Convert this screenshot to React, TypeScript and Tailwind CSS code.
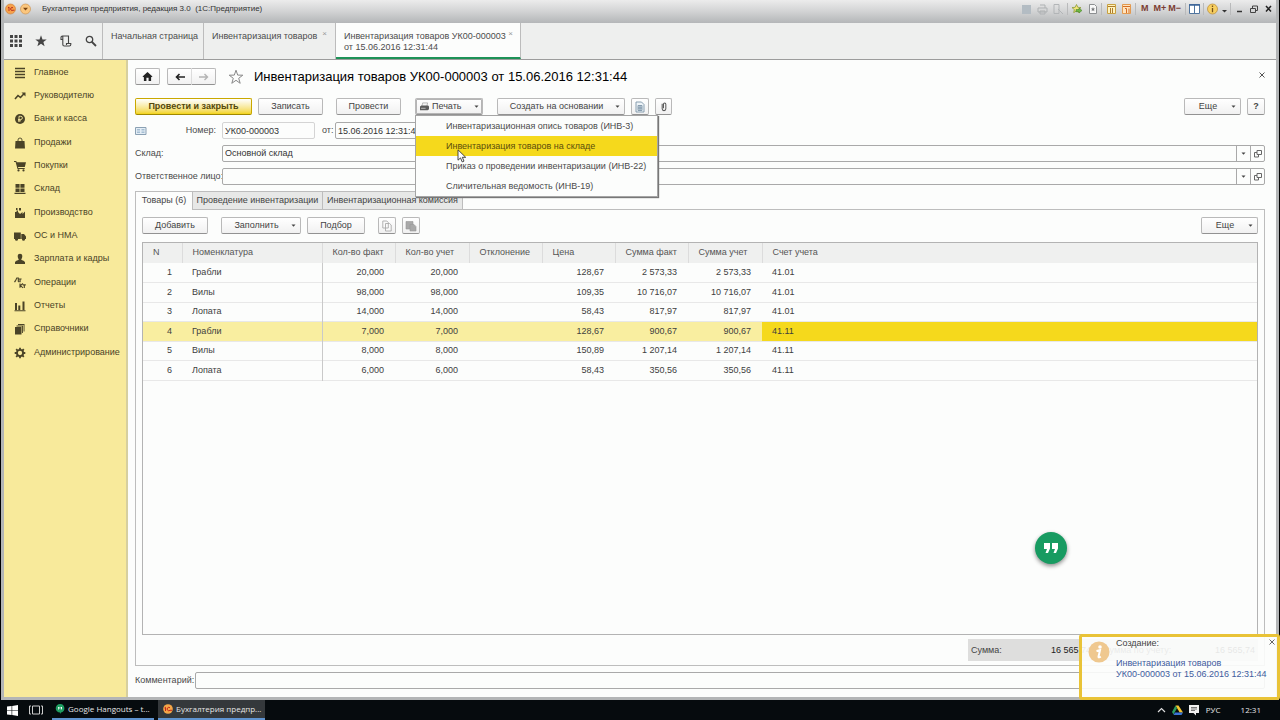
import { useState } from "react";
import type { ReactNode } from "react";
import clsx from "clsx";

type Row = {
  name: string;
  fact: string;
  book: string;
  price: string;
  sumFact: string;
  sumBook: string;
  account: string;
};

const rows: Row[] = [
  { name: "Грабли", fact: "20,000", book: "20,000", price: "128,67", sumFact: "2 573,33", sumBook: "2 573,33", account: "41.01" },
  { name: "Вилы", fact: "98,000", book: "98,000", price: "109,35", sumFact: "10 716,07", sumBook: "10 716,07", account: "41.01" },
  { name: "Лопата", fact: "14,000", book: "14,000", price: "58,43", sumFact: "817,97", sumBook: "817,97", account: "41.01" },
  { name: "Грабли", fact: "7,000", book: "7,000", price: "128,67", sumFact: "900,67", sumBook: "900,67", account: "41.11" },
  { name: "Вилы", fact: "8,000", book: "8,000", price: "150,89", sumFact: "1 207,14", sumBook: "1 207,14", account: "41.11" },
  { name: "Лопата", fact: "6,000", book: "6,000", price: "58,43", sumFact: "350,56", sumBook: "350,56", account: "41.11" },
];

const printForms = [
  "Инвентаризационная опись товаров (ИНВ-3)",
  "Инвентаризация товаров на складе",
  "Приказ о проведении инвентаризации (ИНВ-22)",
  "Сличительная ведомость (ИНВ-19)",
];

const sections: { label: string; icon: ReactNode }[] = [
  { label: "Главное", icon: <path d="M1 1.5h10M1 4.5h10M1 7.5h10M1 10.5h10" fill="none" stroke="currentColor" strokeWidth="1.3" /> },
  {
    label: "Руководителю",
    icon: (
      <>
        <path d="M1 9l3-3.5 2.5 2L10 3.8" fill="none" stroke="currentColor" strokeWidth="1.6" />
        <path d="M7.5 2.5H11.5V6.5z" />
      </>
    ),
  },
  {
    label: "Банк и касса",
    icon: (
      <>
        <circle cx="6" cy="6" r="5" />
        <path d="M5 9V3.3h1.8a1.5 1.5 0 0 1 0 3.2H4M4 7.8h3" fill="none" stroke="#f8e99c" strokeWidth="0.9" />
      </>
    ),
  },
  {
    label: "Продажи",
    icon: (
      <>
        <path d="M1.5 4h9l.5 7.5H1z" />
        <path d="M4 5V3a2 2 0 0 1 4 0v2" fill="none" stroke="currentColor" strokeWidth="0.9" />
      </>
    ),
  },
  {
    label: "Покупки",
    icon: (
      <>
        <path d="M0 1h2.3l.4 1.3H12L10.8 7H4l.3 1h6.4v1H3.5L1.6 2H0z" />
        <circle cx="4.5" cy="10.4" r="1.1" />
        <circle cx="9.5" cy="10.4" r="1.1" />
      </>
    ),
  },
  { label: "Склад", icon: <path d="M1.5 1h4.1v3.7H1.5zM6.4 1h4.1v3.7H6.4zM1.5 5.4h4.1V9H1.5zM6.4 5.4h4.1V9H6.4zM.5 9.7h11V11H.5z" /> },
  { label: "Производство", icon: <path d="M1 11V5h1.5V3.5H4V5l2 2 2.500-2v2L11 4.500V11zM2 1h1.500v2H2zM5 1h2v2.500H5z" /> },
  {
    label: "ОС и НМА",
    icon: (
      <>
        <path d="M0 2.5h6.8V9H0zM7.3 4H10L12 6.5V9H7.3z" />
        <circle cx="2.5" cy="9.2" r="1.5" />
        <circle cx="9.5" cy="9.2" r="1.5" />
      </>
    ),
  },
  { label: "Зарплата и кадры", icon: <path d="M6 .8a2.3 2.3 0 0 1 2.3 2.4C8.3 4.500 7.500 6 7.200 6.500c0 1 3.300 1 3.800 2.700V11H1V9.200C1.500 7.500 4.800 7.500 4.800 6.500 4.500 6 3.700 4.500 3.700 3.200A2.300 2.300 0 0 1 6 .8z" /> },
  {
    label: "Операции",
    icon: (
      <path d="M.8 5.2v-.9h.5L2.8 1h1.5v3.3h.5v.9M4.600 2h3M6.100 2v3.200M6 6.500v4.300M9 6.500L6.400 8.600 9 10.800M8.800 7.900h3M10.300 8v3" fill="none" stroke="currentColor" strokeWidth="1.1" />
    ),
  },
  { label: "Отчеты", icon: <path d="M1 3h2v7H1zM4.3 5.5h2V10h-2zM8.5 1.5h2V10h-2zM.5 10.2h11v1H.5z" /> },
  { label: "Справочники", icon: <path d="M1 4h6.5v7.5H1zM2.5 2.5H9V10h-.9V3.4H2.5zM4 1h6.5v7.5h-.9V1.9H4z" /> },
  {
    label: "Администрирование",
    icon: (
      <>
        <circle cx="6" cy="6" r="3.1" fill="none" stroke="currentColor" strokeWidth="1.9" />
        <path d="M6 .7v2M6 9.3v2M.7 6h2M9.3 6h2M2.2 2.2l1.4 1.4M8.4 8.4l1.4 1.4M2.2 9.8l1.4-1.4M8.4 3.6l1.4-1.4" fill="none" stroke="currentColor" strokeWidth="1.8" />
      </>
    ),
  },
];

const columns = [
  { title: "N", width: "w-[39px]" },
  { title: "Номенклатура", width: "w-[140px]" },
  { title: "Кол-во факт", width: "w-[73px]" },
  { title: "Кол-во учет", width: "w-[74px]" },
  { title: "Отклонение", width: "w-[73px]" },
  { title: "Цена", width: "w-[73px]" },
  { title: "Сумма факт", width: "w-[73px]" },
  { title: "Сумма учет", width: "w-[74px]" },
  { title: "Счет учета", width: "" },
];

function Caret() {
  return (
    <svg viewBox="0 0 5 3" className="h-[3px] w-[5px] shrink-0" fill="#444" aria-hidden="true">
      <path d="M.5.5h4L2.500 2.800z" />
    </svg>
  );
}

function Button({
  children,
  className,
  caret,
  ...rest
}: { children: ReactNode; className?: string; caret?: boolean } & React.ButtonHTMLAttributes<HTMLButtonElement>) {
  return (
    <button
      type="button"
      className={clsx(
        "flex h-[17px] shrink-0 items-center justify-center rounded-[2px] border border-[#b9b9b9] border-b-[#929292] bg-linear-to-b from-white to-[#f1f1f1] text-[#444]",
        className,
      )}
      {...rest}
    >
      {caret ? (
        <>
          <span className="flex-1 text-center">{children}</span>
          <Caret />
        </>
      ) : (
        children
      )}
    </button>
  );
}

function LookupField({ id, label, value }: { id: string; label: string; value: string }) {
  return (
    <div className="flex h-[17px] items-center">
      <label htmlFor={id} className="w-[87px] shrink-0 whitespace-nowrap text-[#4a4a4a]">
        {label}
      </label>
      <div className="flex h-full min-w-0 flex-1 rounded-[2px] border border-[#a9a9a9]">
        <input id={id} defaultValue={value} className="min-w-0 flex-1 bg-transparent px-[2px] text-[#333] outline-none" />
        <button type="button" aria-label="Выбрать" className="flex w-[14px] items-center justify-center border-l border-[#a9a9a9]">
          <Caret />
        </button>
        <button type="button" aria-label="Открыть" className="flex w-[14px] items-center justify-center border-l border-[#a9a9a9]">
          <svg viewBox="0 0 8 8" className="size-2" fill="none" stroke="#666" aria-hidden="true">
            <path d="M3 .5h4.500v4H3zM3 2.500H.5v4.500h4V4.500" />
          </svg>
        </button>
      </div>
    </div>
  );
}

function TitleBar() {
  return (
    <header className="flex h-[23px] items-center bg-linear-to-b from-[#ececec] via-[#d2d3d4] to-[#b4b6b8] pb-[5px] pr-px text-[#333]">
      <svg viewBox="0 0 28 12" className="ml-px h-3 w-[28px]" aria-hidden="true">
        <circle cx="5.5" cy="6" r="5" fill="#f7a14b" stroke="#c77d35" strokeWidth="0.6" />
        <path d="M3 4.8l1-.8v4M8 4.800a1.500 1.500 0 1 0 0 2.400h1.500" fill="none" stroke="#b3261c" strokeWidth="0.9" />
        <circle cx="20.5" cy="6" r="5" fill="#fbc67d" stroke="#c98b45" strokeWidth="0.6" />
        <path d="M18 4.8h5L20.5 7.5z" fill="#7a4310" />
      </svg>
      <h1 className="ml-[9px] whitespace-pre text-[8px]">Бухгалтерия предприятия, редакция 3.0  (1С:Предприятие)</h1>
      <div className="ml-auto flex items-center text-[9px] font-bold text-[#7c3c32]">
        <svg viewBox="0 0 116 12" className="h-3 w-[116px]" fill="none" aria-hidden="true">
          <path d="M1 2h9v9H1z" fill="#b3bcc3" />
          <path d="M17 5h9v4h-9zM19 2h5v3M19 8h5v3h-5z" stroke="#aeb1b3" />
          <path d="M33 1.500h5v9h-5zM37 6l5 5" stroke="#b2b5b7" />
          <path d="M46.500 0v12M80.500 0v12M114.500 0v12" stroke="#b9babb" />
          <path d="M55.500 1.500l1.300 2.800 3.200.3-2.400 2 .7 3-2.800-1.600-2.800 1.600.7-3-2.400-2 3.200-.3z" fill="#f4e67b" stroke="#8b9a39" strokeWidth="0.8" />
          <path d="M55 6.500h3V5l3 2.500-3 2.500V8.700h-3z" fill="#6fb744" stroke="#417c28" strokeWidth="0.5" />
          <path d="M68.500 1.500h5l2 2v7h-7z" fill="#f8f8f8" stroke="#8c8f91" />
          <path d="M72 4l.6 1.500H74L73 6.600l.4 1.600-1.400-.9-1.400.9.400-1.600-1-1.100h1.400z" fill="#77797b" />
          <path d="M86.500 1.500h8v9h-8z" fill="#fff3bd" stroke="#c8a040" />
          <path d="M87 3.500h7M89.500 5v5M91.500 5v5" stroke="#ae7a2c" />
          <path d="M101.500 1.500h8v9h-8z" fill="#ffe4bd" stroke="#e39a50" />
          <path d="M102 3.500h7M104 5.500h1.500V10M108 5.500v4.500" stroke="#d56d26" />
        </svg>
        <button type="button" className="ml-1">M</button>
        <button type="button" className="ml-[5px]">M+</button>
        <button type="button" className="ml-[2px]">M−</button>
        <svg viewBox="0 0 90 12" className="ml-1 h-3 w-[90px]" fill="none" aria-hidden="true">
          <path d="M.5 0v12M18.500 0v12M45.500 0v12" stroke="#b9babb" />
          <path d="M4.500 1.500h10v9h-10zM9.500 2v8" fill="#fff" stroke="#50759f" />
          <path d="M4 2h11" stroke="#3a6397" strokeWidth="1.5" />
          <circle cx="27.5" cy="6" r="5" fill="#f7cf61" stroke="#b98a34" strokeWidth="0.7" />
          <path d="M27.500 2.500v1.400M27.500 5v4.200" stroke="#74511a" strokeWidth="1.3" />
          <path d="M37 7h5L39.500 9.500z" fill="#333" />
          <path d="M52 8.500h5" stroke="#333" strokeWidth="1.5" />
          <path d="M65.500 5.500h5v4h-5zM67.500 5V3h5v4.500H71" stroke="#444" />
          <path d="M81 3l5 5.500M86 3l-5 5.500" stroke="#222" strokeWidth="1.5" />
        </svg>
      </div>
    </header>
  );
}

function OpenTabs() {
  return (
    <div className="flex h-[37px] border-b border-[#9c9c9c] bg-[#eeefee] text-[#4c4c4c]">
      <div className="flex w-[99px] shrink-0 items-center gap-[13px] border-r border-[#bcbcbc] pl-[6px] text-[#444]">
        <button type="button" aria-label="Все функции">
          <svg viewBox="0 0 12 12" className="size-3" fill="currentColor">
            <path d="M0 0h3v3H0zM4.500 0h3v3h-3zM9 0h3v3H9zM0 4.500h3v3H0zM4.500 4.500h3v3h-3zM9 4.500h3v3H9zM0 9h3v3H0zM4.500 9h3v3h-3zM9 9h3v3H9z" />
          </svg>
        </button>
        <button type="button" aria-label="Избранное">
          <svg viewBox="0 0 12 12" className="size-3" fill="currentColor">
            <path d="M6 .3l1.500 4.100 4.200.1-3.300 2.600 1.200 4.200L6 8.800l-3.600 2.500 1.200-4.200L.3 4.500l4.200-.1z" />
          </svg>
        </button>
        <button type="button" aria-label="История">
          <svg viewBox="0 0 12 12" className="size-3" fill="none" stroke="currentColor" strokeWidth="1.1">
            <path d="M2.800 4.500H1V2.500A1.500 1.500 0 0 1 2.500 1H8.500v7M2.800 1.500V9.500A1.500 1.500 0 0 0 4.300 11h5A1.500 1.500 0 0 0 10.800 9.500V8.500H6.500V10" />
          </svg>
        </button>
        <button type="button" aria-label="Поиск">
          <svg viewBox="0 0 12 12" className="size-3" fill="none" stroke="currentColor" strokeWidth="1.3">
            <circle cx="4.5" cy="4.5" r="3.2" />
            <path d="M7 7l4 4" strokeWidth="1.8" />
          </svg>
        </button>
      </div>
      <a href="#home" className="w-[101px] shrink-0 whitespace-nowrap border-r border-[#bcbcbc] pl-2 pt-[8px] leading-[11px]">
        Начальная страница
      </a>
      <div className="flex w-[132px] shrink-0 justify-between border-r border-[#bcbcbc] pl-2 pr-[8px] pt-[8px] leading-[11px]">
        <a href="#list" className="whitespace-nowrap">Инвентаризация товаров</a>
        <button type="button" aria-label="Закрыть вкладку" className="-mt-[3px] h-[11px] text-[8px] text-[#999]">×</button>
      </div>
      <div className="flex w-[185px] shrink-0 justify-between border-b-2 border-r border-b-[#1d9257] border-r-[#bcbcbc] bg-[#fcfdfc] pl-2 pr-[7px] pt-[8px] leading-[11px]">
        <a href="#document" className="whitespace-nowrap">
          Инвентаризация товаров УК00-000003
          <br />
          от 15.06.2016 12:31:44
        </a>
        <button type="button" aria-label="Закрыть вкладку" className="-mt-[3px] h-[11px] text-[8px] text-[#999]">×</button>
      </div>
    </div>
  );
}

function Sidebar() {
  return (
    <nav className="w-[124px] shrink-0 border-r-2 border-[#d6cf9f] bg-[#f8ea9b] pt-px">
      <ul>
        {sections.map((section) => (
          <li key={section.label} className="h-[23px] [&:nth-child(3n)]:h-6">
            <a href="#section" className="flex h-full items-center gap-2 whitespace-nowrap pl-[10px] text-[#4a4327]">
              <svg viewBox="0 0 12 12" className="size-3 shrink-0" fill="currentColor" aria-hidden="true">
                {section.icon}
              </svg>
              <span>{section.label}</span>
            </a>
          </li>
        ))}
      </ul>
    </nav>
  );
}

function PrintMenu() {
  const [open, setOpen] = useState(true);

  return (
    <div className="relative ml-[14px]">
      <Button
        caret
        onClick={() => setOpen(!open)}
        aria-expanded={open}
        className="w-[68px] border-[#8e8e8e] from-[#dcdcdc] to-[#e9e9e9] pl-1 pr-[3px] ring-1 ring-inset ring-[#b5b5b5]"
      >
        <span className="flex items-center gap-[3px]">
          <svg viewBox="0 0 10 10" className="size-[9px]" aria-hidden="true">
            <path d="M3 1h5.500L7.500 5H2z" fill="#f5f5f5" stroke="#888" strokeWidth="0.6" />
            <path d="M0 5l1.500-1.200h7.500L10 5v3L8.500 9.300H0z" fill="#5b5b5b" />
            <path d="M1.200 7h5" stroke="#ddd" strokeWidth="0.8" />
          </svg>
          Печать
        </span>
      </Button>
      {open && (
        <div className="absolute left-0 top-[17px] z-20 w-[243px] border border-[#a5a5a5] bg-[#fcfdfc] shadow-[1px_1px_1px_#777]">
          {printForms.map((form, i) => (
            <button
              key={form}
              type="button"
              className={clsx(
                "block h-5 w-full whitespace-nowrap pl-[30px] pt-px text-left text-[#4b4b4b]",
                i === 1 && "bg-[#f5d91c] text-[#5b4d0c]",
              )}
            >
              {form}
            </button>
          ))}
          <svg viewBox="0 0 10 14" className="absolute left-[41px] top-[33px] h-[14px] w-[10px]" aria-hidden="true">
            <path d="M1 .8v10.400l2.500-2.300 1.700 4 1.800-.8-1.700-3.800h3.400z" fill="#fff" stroke="#333" strokeWidth="0.9" />
          </svg>
        </div>
      )}
    </div>
  );
}

function ItemsTable() {
  return (
    <div className="min-w-0 flex-1 overflow-hidden border border-[#b3b3b3]">
      <table className="w-full table-fixed border-collapse text-[#3e3e3e]">
        <thead>
          <tr className="h-[20px] bg-[#eff0ef] text-[#555]">
            {columns.map((col) => (
              <th
                key={col.title}
                className={clsx("whitespace-nowrap border-r border-[#dcdcdc] p-0 pl-[10px] text-left font-normal last:border-r-0", col.width)}
              >
                {col.title}
              </th>
            ))}
          </tr>
        </thead>
        <tbody>
          {rows.map((row, i) => {
            const selected = i === 3;
            return (
              <tr key={i} className={clsx("h-[19px] border-b border-[#e8e8e8] even:h-5", selected && "bg-[#f9eea0]")}>
                <td className="p-0 pr-[10px] pt-px text-right">{i + 1}</td>
                <td className="border-r border-[#c9c9c9] p-0 pl-[10px] pt-px">{row.name}</td>
                <td className="p-0 pr-[11px] pt-px text-right">{row.fact}</td>
                <td className="p-0 pr-[11px] pt-px text-right">{row.book}</td>
                <td className="p-0" />
                <td className="p-0 pr-[11px] pt-px text-right">{row.price}</td>
                <td className="p-0 pr-[11px] pt-px text-right">{row.sumFact}</td>
                <td className="p-0 pr-[11px] pt-px text-right">{row.sumBook}</td>
                <td className={clsx("p-0 pl-[10px] pt-px", selected && "bg-[#f5d91c]")}>{row.account}</td>
              </tr>
            );
          })}
        </tbody>
      </table>
    </div>
  );
}

function DocumentForm() {
  return (
    <main className="flex min-w-0 flex-1 flex-col bg-[#fcfdfc] pb-2 pl-[7px] pr-[11px] pt-[8px]">
      <div className="flex h-[17px] items-center">
        <Button aria-label="Домой" className="w-[25px]">
          <svg viewBox="0 0 12 10" className="h-[9px] w-[11px]" fill="#222">
            <path d="M6 0l5.500 5-.8.800L10 5.200V10H7.200V6.500H4.800V10H2V5.200l-.7.600L.5 5z" />
          </svg>
        </Button>
        <div className="ml-[7px] flex">
          <Button aria-label="Назад" className="w-[25px] rounded-r-none border-r-[#dcdcdc]">
            <svg viewBox="0 0 10 8" className="h-2 w-[10px]" fill="none" stroke="#222" strokeWidth="1.6">
              <path d="M10 4H1.500M4.500 1l-3 3 3 3" />
            </svg>
          </Button>
          <Button aria-label="Вперед" className="w-6 rounded-l-none border-l-0">
            <svg viewBox="0 0 10 8" className="h-2 w-[10px]" fill="none" stroke="#b4b4b4" strokeWidth="1.4">
              <path d="M0 4h8.500M5.500 1l3 3-3 3" />
            </svg>
          </Button>
        </div>
        <button type="button" aria-label="В избранное" className="ml-[12px]">
          <svg viewBox="0 0 16 16" className="size-4" fill="none" stroke="#888" strokeWidth="1">
            <path d="M8 1.200l1.700 4.900 5.100.1-4.100 3.100 1.500 5L8 11.300l-4.200 3 1.500-5-4.100-3.100 5.100-.1z" />
          </svg>
        </button>
        <h2 className="ml-[10px] whitespace-nowrap text-[13px] text-black">Инвентаризация товаров УК00-000003 от 15.06.2016 12:31:44</h2>
        <button type="button" aria-label="Закрыть" className="mb-1 ml-auto">
          <svg viewBox="0 0 6 6" className="size-[6px]" stroke="#555">
            <path d="M.5.5l5 5M5.500.5l-5 5" />
          </svg>
        </button>
      </div>

      <div className="mt-[13px] flex items-center">
        <Button className="w-[117px] border-[#c9a800] border-b-[#a08800] from-[#ffe82a] to-[#f3d400] font-bold text-[#54480c]">Провести и закрыть</Button>
        <Button className="ml-[6px] w-[65px]">Записать</Button>
        <Button className="ml-[13px] w-[65px]">Провести</Button>
        <PrintMenu />
        <Button caret className="ml-[14px] w-[128px] pr-1">Создать на основании</Button>
        <Button aria-label="Реестр документов" className="ml-[6px] w-[18px]">
          <svg viewBox="0 0 10 12" className="h-3 w-[10px]" fill="#eef4f8" stroke="#7e95a8" strokeWidth="0.9">
            <path d="M1 1h5.500L9 3.500V11H1z" />
            <path d="M3 4.500h4v5H3zM3 6.200h4M3 7.800h4M5 4.500v5" />
          </svg>
        </Button>
        <Button aria-label="Присоединенные файлы" className="ml-[6px] w-[17px]">
          <svg viewBox="0 0 8 12" className="h-[11px] w-2" fill="none" stroke="#555" strokeWidth="1.1">
            <path d="M2 3v5.500a2 2 0 0 0 4 0V3.500a1.300 1.300 0 0 0-2.600 0V8" />
          </svg>
        </Button>
        <Button caret className="ml-auto w-[57px] pr-1">Еще</Button>
        <Button className="ml-[6px] w-[18px] font-bold">?</Button>
      </div>

      <div className="mt-[7px] flex h-[17px] items-center">
        <svg viewBox="0 0 12 8" className="h-2 w-3" aria-hidden="true">
          <path d="M.5.5h10.500v7H.5z" fill="#e3edf5" stroke="#8aa0b3" />
          <path d="M2 2.500h3M2 4h3M2 5.500h3M6.500 2.500h3M6.500 4h3M6.500 5.500h3" stroke="#8aa9c4" strokeWidth="0.7" />
        </svg>
        <label htmlFor="number" className="w-[75px] pr-[6px] text-right text-[#4a4a4a]">Номер:</label>
        <input id="number" defaultValue="УК00-000003" className="h-full w-[93px] rounded-[2px] border border-[#d4d4d4] px-[2px] text-[#333]" />
        <label htmlFor="date" className="ml-[7px] w-[13px] text-[#4a4a4a]">от:</label>
        <input id="date" defaultValue="15.06.2016 12:31:44" className="h-full w-[110px] rounded-[2px] border border-[#a9a9a9] px-[2px] text-[#333]" />
      </div>

      <div className="mt-[6px] flex flex-col gap-[6px]">
        <LookupField id="warehouse" label="Склад:" value="Основной склад" />
        <LookupField id="person" label="Ответственное лицо:" value="" />
      </div>

      <div role="tablist" className="relative mt-[6px] -mb-px flex h-[19px] text-[#444]">
        <button type="button" role="tab" aria-selected="true" className="w-[58px] border border-b-0 border-[#bdbdbd] bg-[#fcfdfc]">
          Товары (6)
        </button>
        <button type="button" role="tab" aria-selected="false" className="w-[130px] border border-l-0 border-[#bdbdbd] bg-[#e7e8e7]">
          Проведение инвентаризации
        </button>
        <button type="button" role="tab" aria-selected="false" className="w-[140px] border border-l-0 border-[#bdbdbd] bg-[#e7e8e7]">
          Инвентаризационная комиссия
        </button>
      </div>

      <section className="flex flex-1 flex-col border border-[#bdbdbd] px-[6px] pb-1 pt-[7px]">
        <div className="mb-2 flex items-center">
          <Button className="w-[66px]">Добавить</Button>
          <Button caret className="ml-[13px] w-20 pr-1">Заполнить</Button>
          <Button className="ml-[6px] w-[58px]">Подбор</Button>
          <Button aria-label="Копировать" className="ml-[13px] w-[18px]">
            <svg viewBox="0 0 10 12" className="h-3 w-[10px]" fill="#fafafa" stroke="#aaa" strokeWidth="0.9">
              <path d="M.8 1h4l1.500 1.500V8H.8zM3.500 3.500h4L9.200 5v6H3.500z" />
            </svg>
          </Button>
          <Button aria-label="Вставить" className="ml-[6px] w-[18px]">
            <svg viewBox="0 0 12 12" className="size-3" fill="#a9a9a9" stroke="#999" strokeWidth="0.6">
              <path d="M1 1.500h7v7.500H1z" />
              <path d="M5 4.500h4l2 2V11H5z" />
            </svg>
          </Button>
          <Button caret className="ml-auto w-[57px] pr-1">Еще</Button>
        </div>
        <ItemsTable />
        <div className="ml-auto mt-1 flex h-[22px] w-[290px] items-center bg-[#dededd] px-[3px] pt-px text-[#444]">
          <span className="w-[80px]">Сумма:</span>
          <span className="text-[#222]">16 565,74</span>
          <span className="ml-[12px]">Сумма по учету:</span>
          <span className="ml-auto text-[#222]">16 565,74</span>
        </div>
      </section>

      <div className="mt-[6px] flex h-[17px] items-center">
        <label htmlFor="comment" className="w-[60px] shrink-0 text-[#4a4a4a]">Комментарий:</label>
        <input id="comment" className="h-full min-w-0 flex-1 rounded-[2px] border border-[#a9a9a9] px-[2px]" />
      </div>
    </main>
  );
}

function Toast() {
  return (
    <aside className="absolute bottom-[20px] right-0 z-30 flex h-[66px] w-[201px] rounded-[3px] border-[3px] border-[#e9c337] bg-[#fcfdfc]/90 pl-[5px] pt-px">
      <svg viewBox="0 0 24 24" className="mt-[2px] size-6 shrink-0" aria-hidden="true">
        <circle cx="12" cy="12" r="10.5" fill="#efc88f" />
        <circle cx="13" cy="7" r="1.8" fill="#fff" />
        <path d="M9.500 11l3.500-.8-1.500 6.500c0 1 1 .8 2.300 0" fill="none" stroke="#fff" strokeWidth="2" />
      </svg>
      <div className="ml-[5px] whitespace-nowrap leading-[11px] text-[#444]">
        <p>Создание:</p>
        <a href="#document" className="mt-[9px] block text-[#3f5c9e]">
          Инвентаризация товаров
          <br />
          УК00-000003 от 15.06.2016 12:31:44
        </a>
      </div>
      <button type="button" aria-label="Закрыть уведомление" className="absolute right-[2px] top-[2px]">
        <svg viewBox="0 0 6 6" className="size-[6px]" stroke="#666">
          <path d="M.5.5l5 5M5.500.5l-5 5" />
        </svg>
      </button>
    </aside>
  );
}

function Taskbar() {
  return (
    <footer className="flex h-5 items-center bg-[#060b0e] font-['Open_Sans','Noto_Sans',sans-serif] text-[8px] text-[#e6e6e6]">
      <button type="button" aria-label="Пуск" className="ml-[7px]">
        <svg viewBox="0 0 11 11" className="size-[11px]" fill="#fff">
          <path d="M0 1.600L4.600 1v4.200H0zM5.200.9L11 0v5.200H5.200zM0 5.800h4.600V10L0 9.400zM5.200 5.800H11V11l-5.800-.9z" />
        </svg>
      </button>
      <button type="button" aria-label="Представление задач" className="ml-[11px]">
        <svg viewBox="0 0 14 10" className="h-[10px] w-[14px]" fill="none" stroke="#ccc">
          <path d="M3.500 1h7v8h-7zM2 1H.5v8H2M12 1h1.500v8H12" />
        </svg>
      </button>
      <button type="button" className="ml-[9px] flex h-full w-[102px] items-center gap-[3px] whitespace-nowrap border-b-2 border-[#5f93cf] pl-[3px]">
        <svg viewBox="0 0 10 10" className="size-[10px] shrink-0">
          <path d="M5 0a4.300 4.300 0 0 1 1 8.500L5 10V8.600A4.300 4.300 0 0 1 5 0z" fill="#1f9d61" />
          <path d="M3 3h1.500v1.500L3.500 6M5.500 3H7v1.500L6 6" fill="#fff" />
        </svg>
        Google Hangouts – t...
      </button>
      <button type="button" className="ml-1 flex h-full w-[107px] items-center gap-[3px] whitespace-nowrap border-b-2 border-[#5f93cf] bg-[#34383b] pl-[5px]">
        <svg viewBox="0 0 10 10" className="size-[10px] shrink-0">
          <circle cx="5" cy="5" r="4.8" fill="#f5a748" />
          <path d="M1.500 4l1-.7V7M7 3.800a1.700 1.700 0 1 0 0 2.500h2" fill="none" stroke="#c4261b" />
        </svg>
        Бухгалтерия предпр...
      </button>
      <div className="ml-auto flex items-center pr-[19px]">
        <svg viewBox="0 0 44 12" className="h-3 w-[44px]" fill="none" aria-hidden="true">
          <path d="M1 8l3.500-3.500L8 8" stroke="#ddd" strokeWidth="1.2" />
          <path d="M18.500 1.500h3l4.500 7h-3.300z" fill="#f4c530" />
          <path d="M18.500 1.500L15 8l1.500 2.500 3.500-6.300z" fill="#2c9c5e" />
          <path d="M26 8.500l-1.500 2.500h-8L18 8.500z" fill="#3a74d4" />
          <path d="M32 1h10v8h-3v2.500L36.500 9H32z" fill="#f1f1f1" />
          <path d="M34 3.500h6M34 5h6M34 6.500h4" stroke="#444" strokeWidth="0.7" />
        </svg>
        <span className="ml-[5px]">РУС</span>
        <time className="ml-[20px]">12:31</time>
      </div>
    </footer>
  );
}

export default function App() {
  return (
    <div className="relative flex min-h-screen flex-col bg-black font-['Liberation_Sans',Arial,sans-serif] text-[9px]">
      <div className="mx-px flex flex-1 flex-col border-x-[3px] border-b-[3px] border-[#b3b5b6]">
        <TitleBar />
        <OpenTabs />
        <div className="flex flex-1">
          <Sidebar />
          <DocumentForm />
        </div>
      </div>
      <Taskbar />
      <button
        type="button"
        aria-label="Hangouts"
        className="absolute bottom-[156px] right-[213px] z-10 flex size-8 items-center justify-center rounded-full bg-[#179b61] shadow-[0_2px_4px_rgba(0,0,0,0.45)]"
      >
        <svg viewBox="0 0 14 10" className="h-[10px] w-[14px]" fill="#fff">
          <path d="M0 0h6v5.500L4 10H1.500L3 6H0zM8 0h6v5.500L12 10H9.500L11 6H8z" />
        </svg>
      </button>
      <Toast />
    </div>
  );
}
